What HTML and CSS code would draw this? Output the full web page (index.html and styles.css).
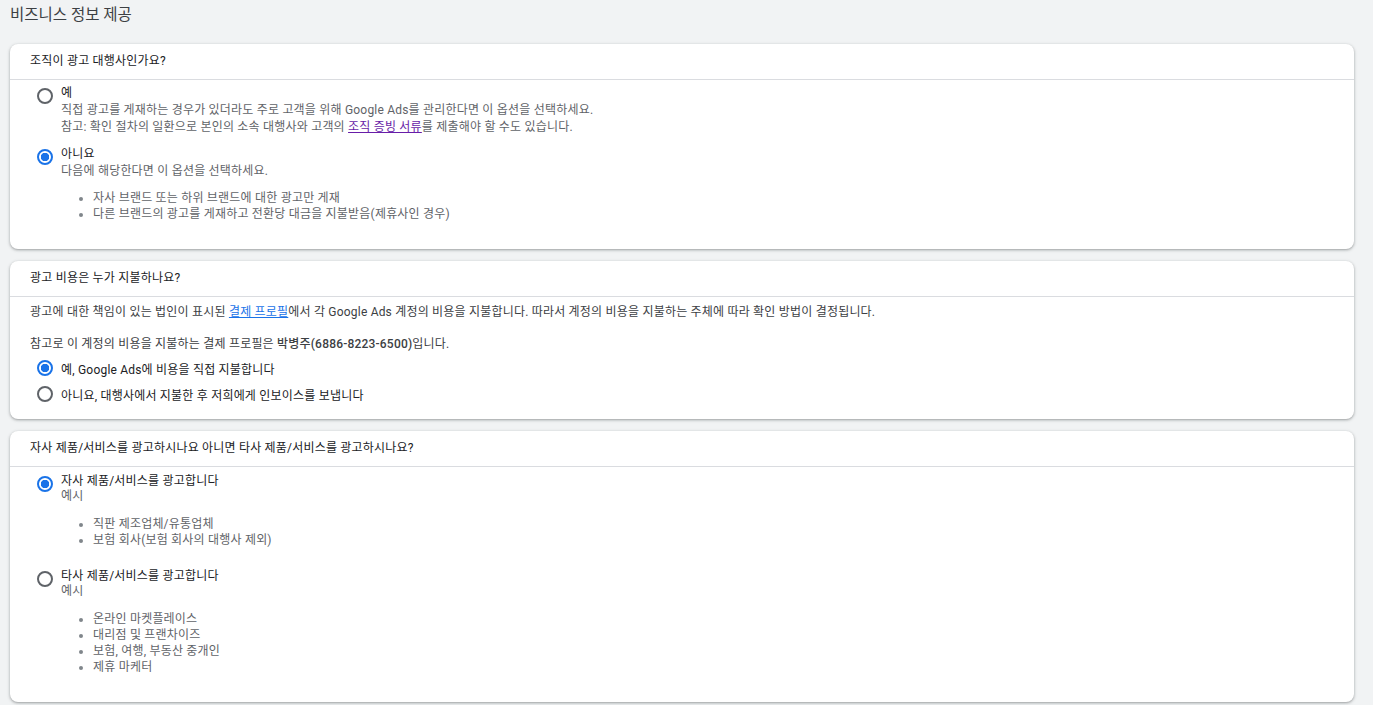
FILE: index.html
```html
<!DOCTYPE html>
<html lang="ko">

<head>
    <meta charset="UTF-8">
    <meta name="viewport" content="width=device-width, initial-scale=1.0">
    <title>비즈니스 정보 제공</title>
    <link rel="stylesheet" href="styles.css">
</head>

<body>
    <h1 class="page-title">비즈니스 정보 제공</h1>

    <!-- 대행사 여부 -->
    <section class="card">
        <div class="card-head">조직이 광고 대행사인가요?</div>
        <div class="card-body agency">
            <label class="option">
                <input type="radio" name="agency">
                <div class="opt-text">
                    <p class="opt-label">예</p>
                    <p class="desc">직접 광고를 게재하는 경우가 있더라도 주로 고객을 위해 Google Ads를 관리한다면 이 옵션을 선택하세요.</p>
                    <p class="desc">참고: 확인 절차의 일환으로 본인의 소속 대행사와 고객의 <a href="#" class="visited">조직 증빙 서류</a>를 제출해야 할 수도 있습니다.</p>
                </div>
            </label>
            <label class="option">
                <input type="radio" name="agency" checked>
                <div class="opt-text">
                    <p class="opt-label">아니요</p>
                    <p class="desc">다음에 해당한다면 이 옵션을 선택하세요.</p>
                    <ul class="bullets">
                        <li>자사 브랜드 또는 하위 브랜드에 대한 광고만 게재</li>
                        <li>다른 브랜드의 광고를 게재하고 전환당 대금을 지불받음(제휴사인 경우)</li>
                    </ul>
                </div>
            </label>
        </div>
    </section>

    <!-- 비용 지불 -->
    <section class="card">
        <div class="card-head">광고 비용은 누가 지불하나요?</div>
        <div class="card-body payer">
            <p class="para">광고에 대한 책임이 있는 법인이 표시된 <a href="#">결제 프로필</a>에서 각 Google Ads 계정의 비용을 지불합니다. 따라서 계정의 비용을 지불하는 주체에 따라 확인 방법이 결정됩니다.</p>
            <p class="para">참고로 이 계정의 비용을 지불하는 결제 프로필은 <b>박병주(6886-8223-6500)</b>입니다.</p>
            <div class="rows">
                <label class="row">
                    <input type="radio" name="payer" checked>
                    <span>예, Google Ads에 비용을 직접 지불합니다</span>
                </label>
                <label class="row">
                    <input type="radio" name="payer">
                    <span>아니요, 대행사에서 지불한 후 저희에게 인보이스를 보냅니다</span>
                </label>
            </div>
        </div>
    </section>

    <!-- 자사/타사 -->
    <section class="card">
        <div class="card-head">자사 제품/서비스를 광고하시나요 아니면 타사 제품/서비스를 광고하시나요?</div>
        <div class="card-body product">
            <label class="option">
                <input type="radio" name="product" checked>
                <div class="opt-text">
                    <p class="opt-label">자사 제품/서비스를 광고합니다</p>
                    <p class="desc small">예시</p>
                    <ul class="bullets">
                        <li>직판 제조업체/유통업체</li>
                        <li>보험 회사(보험 회사의 대행사 제외)</li>
                    </ul>
                </div>
            </label>
            <label class="option">
                <input type="radio" name="product">
                <div class="opt-text">
                    <p class="opt-label">타사 제품/서비스를 광고합니다</p>
                    <p class="desc small">예시</p>
                    <ul class="bullets">
                        <li>온라인 마켓플레이스</li>
                        <li>대리점 및 프랜차이즈</li>
                        <li>보험, 여행, 부동산 중개인</li>
                        <li>제휴 마케터</li>
                    </ul>
                </div>
            </label>
        </div>
    </section>
</body>

</html>
```

FILE: styles.css
```css
* {
    margin: 0;
    padding: 0;
    box-sizing: border-box;
}

body {
    background: #f1f3f4;
    padding: 0 19px 0 10px;
    font-family: Roboto, "Noto Sans CJK KR", sans-serif;
    font-size: 12px;
    letter-spacing: 0.2px;
    color: #202124;
}

.page-title {
    font-size: 15.5px;
    font-weight: 400;
    letter-spacing: 0;
    line-height: 30px;
    color: #3c4043;
    margin-bottom: 14px;
}

.card {
    background: #fff;
    border-radius: 8px;
    box-shadow: 0 1px 2px 0 rgba(60, 64, 67, .3), 0 1px 3px 1px rgba(60, 64, 67, .15);
    margin-bottom: 12px;
}

.card-head {
    height: 36px;
    line-height: 35px;
    padding: 0 20px;
    border-bottom: 1px solid #dadce0;
    color: #202124;
}

.card-body {
    padding: 5px 20px 27px 27px;
}

.option {
    display: flex;
    gap: 8px;
    margin-bottom: 10px;
}

.option:last-child {
    margin-bottom: 0;
}

input[type="radio"] {
    appearance: none;
    flex: none;
    width: 16px;
    height: 16px;
    margin-top: 3px;
    border: 2px solid #5f6368;
    border-radius: 50%;
    background: #fff;
}

input[type="radio"]:checked {
    border-color: #1a73e8;
    background: radial-gradient(circle, #1a73e8 0 4px, #fff 4.5px);
}

.opt-text p {
    line-height: 17px;
}

.opt-label {
    color: #202124;
}

.desc {
    color: #5f6368;
}

a {
    color: #1a73e8;
}

a.visited {
    color: #681da8;
}

.bullets {
    margin-top: 10px;
    padding-left: 32px;
    color: #5f6368;
    line-height: 16px;
}

.bullets li::marker {
    color: #80868b;
}

/* 두번째 카드 */
.card-body.payer {
    padding: 7px 20px 12px 20px;
}

.para {
    line-height: 16px;
    color: #3c4043;
    margin-bottom: 16px;
}

.para:nth-of-type(2) {
    margin-bottom: 3px;
}

.para b {
    font-weight: 500;
}

.row {
    display: flex;
    align-items: center;
    gap: 8px;
    height: 26px;
    padding-left: 7px;
    color: #202124;
}

.row input[type="radio"] {
    margin-top: -1px;
}

/* 세번째 카드 */
.card-body.product {
    padding-top: 6px;
}

.product .option {
    margin-bottom: 20px;
}

.product .option:last-child {
    margin-bottom: 0;
}

.product .opt-label {
    line-height: 16px;
}

.product .desc.small {
    line-height: 14px;
}

.product .bullets {
    margin-top: 13px;
}
```
